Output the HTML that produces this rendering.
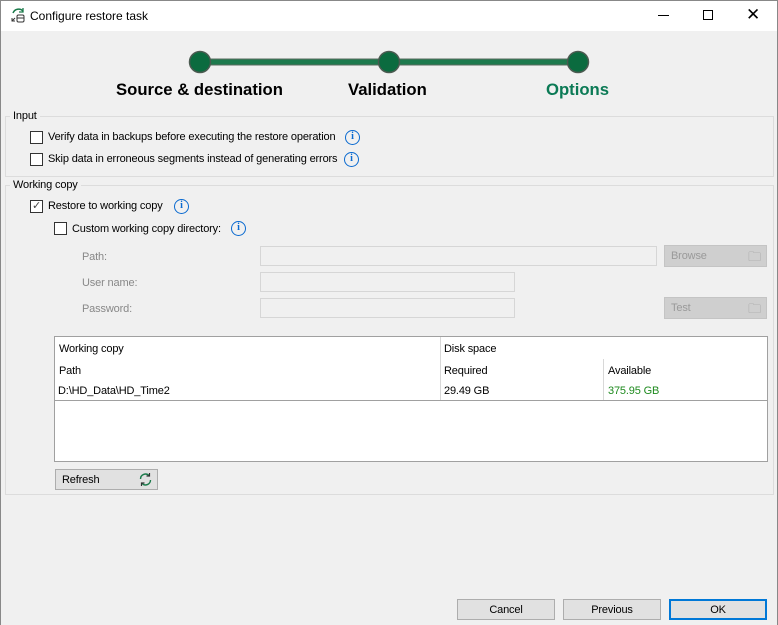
<!DOCTYPE html><html><head><style>
*{margin:0;padding:0;box-sizing:border-box}
body{width:778px;height:625px;background:#f0f0f0;font-family:"Liberation Sans",sans-serif;font-size:11px;letter-spacing:-0.15px;color:#000;position:relative;overflow:hidden}
.a{position:absolute;white-space:nowrap}
.win{position:absolute;left:0;top:0;width:778px;height:625px;border:1px solid #888;border-bottom:none}
.title{position:absolute;left:1px;top:1px;width:776px;height:30px;background:#fff}
.grp{position:absolute;border:1px solid #dcdcdc}
.cb{position:absolute;width:13px;height:13px;border:1px solid #333;background:#fff}
.info{position:absolute;width:15px;height:15px;border:1.6px solid #0a6ad0;border-radius:50%;color:#0a6ad0;font-weight:bold;font-size:10px;text-align:center;line-height:12px;font-family:"Liberation Serif",serif;letter-spacing:0}
.inp{position:absolute;border:1px solid #d6d6d6;background:#f0f0f0;height:20px}
.dbtn{position:absolute;background:#cfcfcf;border:1px solid #c4c4c4;color:#9a9a9a;height:22px;padding:4px 6px}
.btn{position:absolute;background:#e1e1e1;border:1px solid #adadad;height:21px;text-align:center;line-height:21px}
.g{color:#888}
</style></head><body>
<div class="win"></div>
<div class="title"></div>
<svg class="a" style="left:10px;top:7px" width="16" height="16" viewBox="0 0 16 16"><path d="M3 6 A6 6 0 0 1 13 4" stroke="#1a7a4a" stroke-width="1.5" fill="none"/><path d="M13 1v4h-4" stroke="#1a7a4a" stroke-width="1.3" fill="none"/><rect x="7" y="8" width="7" height="7" rx="1.5" stroke="#333" fill="none"/><path d="M7 11h7M2 14l3-3M2 11v3h3" stroke="#333" fill="none"/></svg>
<div class="a" style="left:30px;top:9px;font-size:12px;letter-spacing:0">Configure restore task</div>
<div class="a" style="left:658px;top:15px;width:11px;height:1px;background:#000"></div>
<div class="a" style="left:703px;top:10px;width:10px;height:10px;border:1px solid #000"></div>
<div class="a" style="left:746px;top:5px;font-size:17px">✕</div>
<svg class="a" style="left:185px;top:48px" width="410" height="30"><rect x="15" y="11" width="380" height="6" fill="#1d7a4d" stroke="#5a6b60" stroke-width="1"/><g fill="#0b6b3f" stroke="#4a5a50" stroke-width="1.5"><circle cx="15" cy="14" r="10.5"/><circle cx="204" cy="14" r="10.5"/><circle cx="393" cy="14" r="10.5"/></g></svg>
<div class="a" style="left:116px;top:80px;font-size:16.7px;font-weight:bold;letter-spacing:0">Source &amp; destination</div>
<div class="a" style="left:348px;top:80px;font-size:16.7px;font-weight:bold;letter-spacing:0">Validation</div>
<div class="a" style="left:546px;top:80px;font-size:16.7px;font-weight:bold;color:#0b7a55;letter-spacing:0">Options</div>

<div class="grp" style="left:5px;top:116px;width:769px;height:61px"></div>
<div class="a" style="left:10px;top:110px;background:#f0f0f0;padding:0 3px">Input</div>
<div class="cb" style="left:30px;top:131px"></div><div class="a" style="left:48px;top:131px">Verify data in backups before executing the restore operation</div><div class="info" style="left:345px;top:130px">i</div>
<div class="cb" style="left:30px;top:153px"></div><div class="a" style="left:48px;top:153px">Skip data in erroneous segments instead of generating errors</div><div class="info" style="left:344px;top:152px">i</div>

<div class="grp" style="left:5px;top:185px;width:769px;height:310px"></div>
<div class="a" style="left:10px;top:179px;background:#f0f0f0;padding:0 3px">Working copy</div>
<div class="cb" style="left:30px;top:200px;font-size:11px;line-height:10px;text-align:center;color:#444">✓</div><div class="a" style="left:48px;top:200px">Restore to working copy</div><div class="info" style="left:174px;top:199px">i</div>
<div class="cb" style="left:54px;top:222px"></div><div class="a" style="left:72px;top:223px">Custom working copy directory:</div><div class="info" style="left:231px;top:221px">i</div>

<div class="a g" style="left:82px;top:251px">Path:</div><div class="inp" style="left:260px;top:246px;width:397px"></div>
<div class="a g" style="left:82px;top:277px">User name:</div><div class="inp" style="left:260px;top:272px;width:255px"></div>
<div class="a g" style="left:82px;top:303px">Password:</div><div class="inp" style="left:260px;top:298px;width:255px"></div>
<div class="dbtn" style="left:664px;top:245px;width:103px">Browse<span style="position:absolute;right:5px;top:2px;font-size:13px">🗀</span></div>
<div class="dbtn" style="left:664px;top:297px;width:103px">Test<span style="position:absolute;right:5px;top:2px;font-size:13px">🗀</span></div>

<div class="a" style="left:54px;top:336px;width:714px;height:126px;background:#fff;border:1px solid #a0a0a0"></div>
<div class="a" style="left:54px;top:336px;width:714px;height:65px;border:1px solid #a0a0a0"></div>
<div class="a" style="left:440px;top:337px;width:1px;height:63px;background:#d8d8d8"></div>
<div class="a" style="left:603px;top:359px;width:1px;height:41px;background:#d8d8d8"></div>
<div class="a" style="left:59px;top:343px">Working copy</div><div class="a" style="left:444px;top:343px">Disk space</div>
<div class="a" style="left:59px;top:365px">Path</div><div class="a" style="left:444px;top:365px">Required</div><div class="a" style="left:608px;top:365px">Available</div>
<div class="a" style="left:58px;top:385px">D:\HD_Data\HD_Time2</div><div class="a" style="left:444px;top:385px">29.49 GB</div><div class="a" style="left:608px;top:385px;color:#1e8a1e">375.95 GB</div>

<div class="btn" style="left:55px;top:469px;width:103px;text-align:left;padding-left:6px">Refresh<svg style="position:absolute;right:4px;top:2px" width="15" height="15" viewBox="0 0 15 15"><path d="M2.5 7A5 5 0 0 1 11 3.5M12.5 8A5 5 0 0 1 4 11.5" stroke="#1a7a4a" stroke-width="1.4" fill="none"/><path d="M11.5 1v3h-3M3.5 14v-3h3" stroke="#333" stroke-width="1.2" fill="none"/></svg></div>

<div class="btn" style="left:457px;top:599px;width:98px">Cancel</div>
<div class="btn" style="left:563px;top:599px;width:98px">Previous</div>
<div class="btn" style="left:669px;top:599px;width:98px;border:2px solid #0078d7;line-height:19px">OK</div>
</body></html>
